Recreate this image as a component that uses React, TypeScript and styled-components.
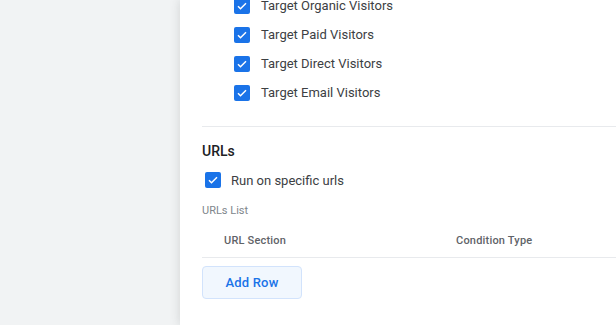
import styled, { createGlobalStyle } from "styled-components";

const Global = createGlobalStyle`
	html, body {
		margin: 0;
		padding: 0;
		background: #f1f3f4;
		font-family: Roboto, "Liberation Sans", sans-serif;
		overflow: hidden;
	}
`;

const Page = styled.div`
	display: flex;
	width: 616px;
	height: 325px;
	overflow: hidden;
`;

const Side = styled.div`
	width: 180px;
	flex-shrink: 0;
	background: #f1f3f4;
`;

const Panel = styled.div`
	flex: 1;
	background: #fff;
	box-shadow: 0 0 10px rgba(60, 64, 67, 0.18);
	padding-left: 22px;
	position: relative;
`;

const CheckList = styled.div`
	display: flex;
	flex-direction: column;
	margin-top: -9px;
	margin-bottom: 19px;
	padding-left: 32px;
`;

const CheckRow = styled.label`
	display: flex;
	align-items: center;
	gap: 11px;
	height: 29px;
	font-size: 13px;
	color: #3c4043;
`;

const Box = styled.span`
	width: 16px;
	height: 16px;
	border-radius: 2px;
	background: #1a73e8;
	display: flex;
	align-items: center;
	justify-content: center;
	flex-shrink: 0;
`;

const Divider = styled.div`
	height: 1px;
	background: #e8eaed;
`;

const Section = styled.div`
	padding-top: 14px;
`;

const Title = styled.div`
	font-size: 14px;
	font-weight: 500;
	color: #202124;
	height: 20px;
	line-height: 20px;
`;

const RunRow = styled(CheckRow)`
	padding-left: 3px;
	gap: 10px;
	margin-top: 4px;
	height: 30px;
`;

const ListLabel = styled.div`
	font-size: 11px;
	color: #80868b;
	margin-top: 9px;
	height: 14px;
	line-height: 14px;
`;

const HeaderRow = styled.div`
	display: grid;
	grid-template-columns: 232px 1fr;
	padding-left: 22px;
	height: 34px;
	align-items: center;
	margin-top: 5px;
	font-size: 11px;
	font-weight: 500;
	color: #5f6368;
	letter-spacing: 0.2px;
	border-bottom: 1px solid #e8eaed;
`;

const AddButton = styled.button`
	margin-top: 8px;
	width: 100px;
	height: 33px;
	background: #f1f7fe;
	border: 1px solid #d2e3fc;
	border-radius: 4px;
	color: #1a73e8;
	font-family: inherit;
	font-size: 13px;
	font-weight: 500;
	letter-spacing: 0.2px;
	cursor: pointer;
`;

function Check() {
	return (
		<Box>
			<svg width="12" height="12" viewBox="0 0 24 24">
				<path
					d="M4 12.5l5 5L20 6.5"
					fill="none"
					stroke="#fff"
					strokeWidth="3"
				/>
			</svg>
		</Box>
	);
}

const targets = [
	"Target Organic Visitors",
	"Target Paid Visitors",
	"Target Direct Visitors",
	"Target Email Visitors",
];

export default function App() {
	return (
		<>
			<Global />
			<Page>
				<Side />
				<Panel>
					<CheckList>
						{targets.map((t) => (
							<CheckRow key={t}>
								<Check />
								{t}
							</CheckRow>
						))}
					</CheckList>
					<Divider />
					<Section>
						<Title>URLs</Title>
						<RunRow>
							<Check />
							Run on specific urls
						</RunRow>
						<ListLabel>URLs List</ListLabel>
						<HeaderRow>
							<span>URL Section</span>
							<span>Condition Type</span>
						</HeaderRow>
						<AddButton>Add Row</AddButton>
					</Section>
				</Panel>
			</Page>
		</>
	);
}
